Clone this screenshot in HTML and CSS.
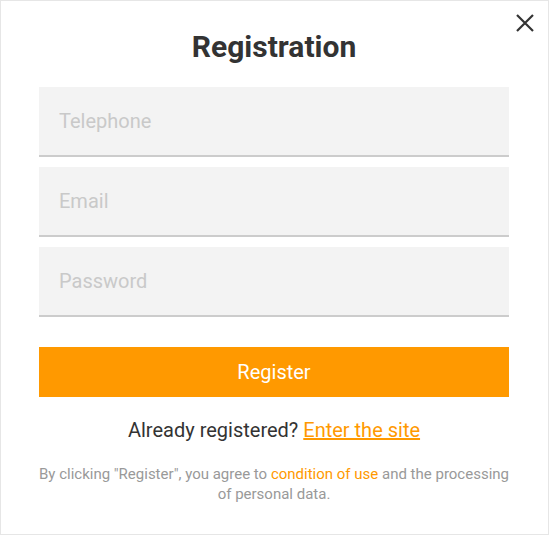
FILE: index.html
```html
<!DOCTYPE html>
<html>
<head>
<meta charset="utf-8">
<link rel="stylesheet" href="styles.css">
</head>
<body>
<div class="modal">
  <button class="close" aria-label="Close">
    <svg width="18" height="18" viewBox="0 0 18 18"><path d="M1 1L17 17M17 1L1 17" stroke="#333" stroke-width="2.2" fill="none"/></svg>
  </button>
  <h1 class="title">Registration</h1>
  <form class="form">
    <input class="field" type="text" placeholder="Telephone">
    <input class="field" type="text" placeholder="Email">
    <input class="field" type="password" placeholder="Password">
    <button class="submit" type="button">Register</button>
  </form>
  <p class="already">Already registered? <a href="#" class="link">Enter the site</a></p>
  <p class="terms">By clicking "Register", you agree to <a href="#" class="terms-link">condition of use</a> and the processing of personal data.</p>
</div>
</body>
</html>
```
FILE: styles.css
```css
html, body {
  margin: 0;
  padding: 0;
  background: #fff;
}
body {
  font-family: Roboto, "Noto Sans", sans-serif;
}
.modal {
  position: relative;
  box-sizing: border-box;
  width: 549px;
  height: 535px;
  border: 1px solid #e6e6e6;
  padding: 29px 39px 0 38px;
}
.close {
  position: absolute;
  top: 13px;
  right: 14px;
  width: 18px;
  height: 18px;
  padding: 0;
  border: 0;
  background: none;
  display: block;
}
.close svg { display: block; }
.title {
  margin: 0;
  text-align: center;
  font-size: 30px;
  line-height: 34px;
  font-weight: 700;
  color: #333;
}
.form {
  margin-top: 23px;
  display: flex;
  flex-direction: column;
  gap: 10px;
}
.field {
  box-sizing: border-box;
  width: 100%;
  height: 70px;
  margin: 0;
  border: 0;
  border-bottom: 2px solid #cccccc;
  background: #f3f3f3;
  padding: 0 20px;
  font-family: Roboto, sans-serif;
  font-size: 20px;
  color: #333;
  outline: none;
}
.field::placeholder {
  color: #c9c9c9;
}
.submit {
  margin-top: 20px;
  height: 50px;
  border: 0;
  background: #ff9900;
  color: #fff;
  font-family: Roboto, sans-serif;
  font-size: 20px;
  padding: 0;
}
.already {
  margin: 21px 0 0 0;
  text-align: center;
  font-size: 20px;
  line-height: 24px;
  color: #333;
}
.link {
  color: #ff9900;
  text-decoration: underline;
}
.terms {
  margin: 22px -4px 0 -4px;
  text-align: center;
  font-size: 15px;
  line-height: 20px;
  color: #999;
}
.terms-link {
  color: #ff9900;
  text-decoration: none;
}
```
